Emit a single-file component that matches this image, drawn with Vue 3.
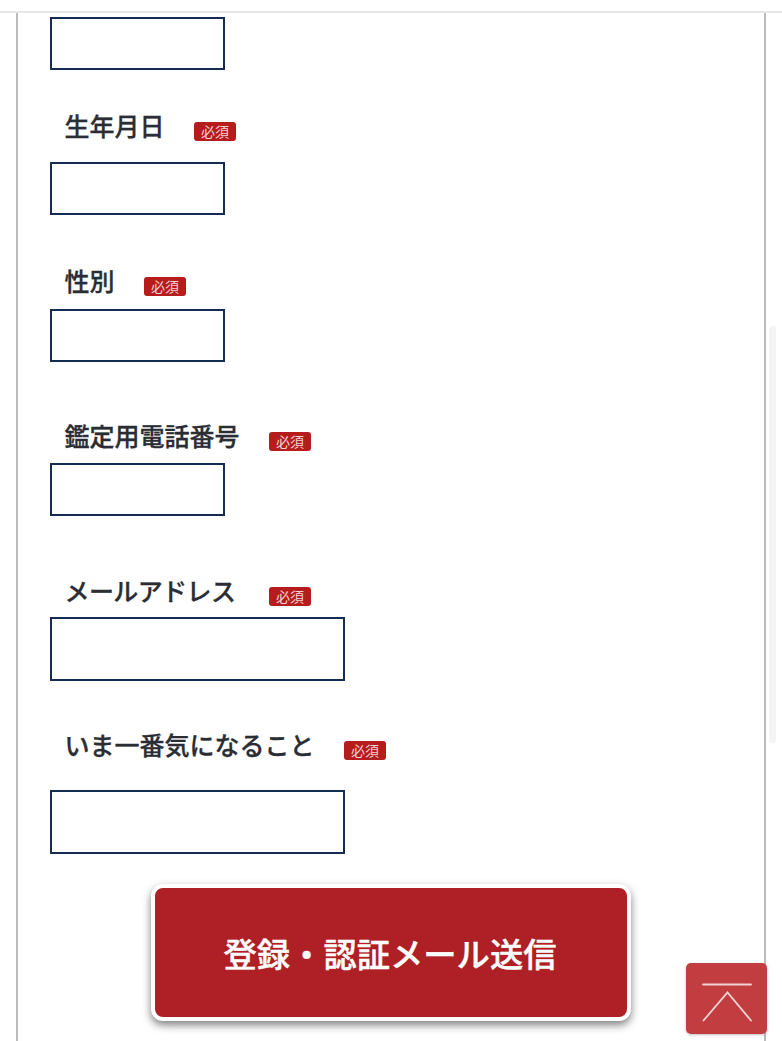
<script setup>
const fields = [
  { label: '', wide: false, gap: 'f0' },
  { label: '生年月日', wide: false, gap: 'f1' },
  { label: '性別', wide: false, gap: 'f2' },
  { label: '鑑定用電話番号', wide: false, gap: 'f3' },
  { label: 'メールアドレス', wide: true, gap: 'f4' },
  { label: 'いま一番気になること', wide: true, gap: 'f5' },
]
</script>

<template>
  <div class="page">
    <div class="topbar"></div>
    <main class="panel">
      <form class="form" @submit.prevent>
        <div v-for="f in fields" :key="f.gap" class="field" :class="f.gap">
          <div v-if="f.label" class="label-row">
            <span class="label">{{ f.label }}</span>
            <span class="badge">必須</span>
          </div>
          <input class="input" :class="{ wide: f.wide }" type="text" />
        </div>
        <button class="submit" type="submit">登録・認証メール送信</button>
      </form>
    </main>
    <div class="scrollbar"></div>
    <button class="to-top" type="button" aria-label="ページ上部へ">
      <svg width="50" height="46" viewBox="0 0 50 46" fill="none" stroke="#f0d4d4" stroke-width="1.8" stroke-linecap="round">
        <path d="M1 8.500H49" />
        <path d="M1.500 44.500L25.500 16.500L49 44.500" />
      </svg>
    </button>
  </div>
</template>

<style>
html, body { margin: 0; background: #fff; }
</style>

<style scoped>
.page {
  position: relative;
  width: 782px;
  height: 1041px;
  overflow: hidden;
  background: #fff;
  font-family: "Noto Sans CJK JP", "Noto Sans", sans-serif;
}
.topbar {
  height: 11px;
  border-bottom: 2px solid #e6e6e6;
}
.panel {
  box-sizing: border-box;
  width: 750px;
  height: 1028px;
  margin-left: 16px;
  border-left: 2px solid #bbb;
  border-right: 2px solid #bbb;
  padding: 4px 0 0 32px;
}
.form { display: flex; flex-direction: column; }
.field { display: flex; flex-direction: column; align-items: flex-start; }
.label-row {
  display: flex;
  align-items: center;
  height: 36px;
  padding-left: 14.500px;
}
.label {
  font-size: 25px;
  line-height: 34px;
  font-weight: 500;
  -webkit-text-stroke: 0.3px #2a2d33;
  color: #2a2d33;
  margin: 0 29.500px 2px 0;
}
.badge {
  box-sizing: border-box;
  width: 42px;
  height: 19px;
  margin-top: 10px;
  border-radius: 3px;
  background: #b71c1c;
  color: #f3d2d2;
  font-size: 14px;
  line-height: 18px;
  text-align: center;
}
.input {
  display: block;
  box-sizing: border-box;
  width: 175px;
  height: 53px;
  padding: 0;
  border: 2px solid #152c52;
  border-radius: 0;
  background: #fff;
  outline: none;
}
.input.wide { width: 295px; height: 64px; }
.f1 { margin-top: 38px; }
.f1 .label-row { margin-bottom: 18px; }
.f2 { margin-top: 48px; }
.f2 .label-row { margin-bottom: 10px; }
.f3 { margin-top: 56px; }
.f3 .label-row { margin-bottom: 9px; }
.f4 { margin-top: 57px; }
.f4 .label-row { margin-bottom: 8px; }
.f4 .label { letter-spacing: -0.6px; margin-right: 33.700px; }
.f5 { margin-top: 46px; }
.f5 .label-row { margin-bottom: 27px; }
.submit {
  box-sizing: border-box;
  align-self: flex-start;
  width: 480px;
  height: 137px;
  margin: 30px 0 0 101px;
  border: 4px solid #fff;
  border-radius: 12px;
  background: #ae2025;
  box-shadow: 0 4px 8px rgba(0, 0, 0, 0.5);
  color: #fff;
  font-family: inherit;
  font-size: 33.300px;
  font-weight: 500;
  -webkit-text-stroke: 0.4px #fff;
  padding: 0 2px 0 0;
}
.scrollbar {
  position: absolute;
  left: 769px;
  top: 326px;
  width: 7px;
  height: 417px;
  border-radius: 3px;
  background: #f4f4f4;
}
.to-top {
  position: absolute;
  left: 686px;
  top: 963px;
  width: 81px;
  height: 71px;
  display: flex;
  align-items: center;
  justify-content: center;
  padding: 0;
  border: 0;
  border-radius: 5px;
  background: #c13d40;
  box-shadow: 0 1px 3px rgba(0, 0, 0, 0.25);
}
</style>
